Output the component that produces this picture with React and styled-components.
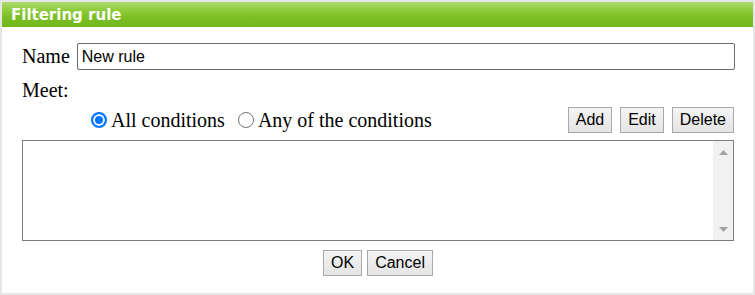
import React from 'react';
import styled, { createGlobalStyle } from 'styled-components';

const Global = createGlobalStyle`
  html, body { margin: 0; padding: 0; background: #fff; }
  body { width: 755px; height: 295px; overflow: hidden; }
`;

const Panel = styled.div`
  box-sizing: border-box;
  width: 755px;
  height: 295px;
  border: 2px solid #e6e6e6;
  display: flex;
  flex-direction: column;
  background: #fff;
`;

const Header = styled.div`
  flex: none;
  height: 25px;
  display: flex;
  align-items: center;
  padding-left: 9px;
  background: linear-gradient(to bottom, #b0dc70 0%, #90cd40 30%, #7bbf24 60%, #72b71c 100%);
  color: #fff;
  font: bold 15px "DejaVu Sans", Verdana, sans-serif;
`;

const Body = styled.div`
  flex: 1;
  display: flex;
  flex-direction: column;
  padding: 16px 19px 0 20px;
  font-family: "Liberation Serif", "Times New Roman", serif;
  font-size: 20px;
  color: #000;
`;

const NameRow = styled.div`
  display: flex;
  align-items: center;
  gap: 7px;
`;

const Label = styled.span`
  line-height: 23px;
  margin-top: ${p => p.$mt || 0}px;
`;

const TextInput = styled.input`
  flex: 1;
  box-sizing: border-box;
  height: 27px;
  margin: 0 -1px 0 0;
  padding: 0 4px;
  border: 1px solid #6b6b6b;
  border-radius: 2px;
  font: 16px "Liberation Sans", Arial, sans-serif;
  color: #000;
  outline: none;
`;

const OptionsRow = styled.div`
  margin-top: 5px;
  height: 26px;
  display: flex;
  align-items: center;
  justify-content: space-between;
`;

const RadioGroup = styled.div`
  display: flex;
  align-items: center;
  gap: 13px;
  padding-left: 69px;
`;

const RadioLabel = styled.label`
  display: inline-flex;
  align-items: center;
  gap: 4px;
  line-height: 23px;
`;

const Radio = styled.input.attrs({ type: 'radio' })`
  appearance: none;
  -webkit-appearance: none;
  box-sizing: border-box;
  width: 16px;
  height: 16px;
  margin: 0;
  border-radius: 50%;
  border: 1px solid #767676;
  background: #fff;
  &:checked {
    border: 2px solid #0075ff;
    background: #0075ff;
    box-shadow: inset 0 0 0 2px #fff;
  }
`;

const ButtonGroup = styled.div`
  display: flex;
  gap: ${p => p.$gap}px;
  justify-content: ${p => p.$center ? 'center' : 'flex-end'};
  margin-top: ${p => p.$mt || 0}px;
`;

const Button = styled.button`
  box-sizing: border-box;
  height: 26px;
  margin: 0;
  padding: 0 7px;
  border: 1px solid #a9a9a9;
  border-radius: 0;
  background: linear-gradient(to bottom, #f4f4f4, #e4e4e4);
  font: 16px "Liberation Sans", Arial, sans-serif;
  color: #000;
`;

const ListBox = styled.div`
  margin-top: 7px;
  box-sizing: border-box;
  height: 101px;
  border: 1px solid #7d7d7d;
  display: flex;
  justify-content: flex-end;
`;

const ScrollBar = styled.div`
  width: 20px;
  background: #f1f1f1;
  display: flex;
  flex-direction: column;
  justify-content: space-between;
`;

const ScrollButton = styled.div`
  height: 22px;
  display: flex;
  align-items: center;
  justify-content: center;
`;

const Arrow = ({ down }) => (
  <svg width="9" height="5" viewBox="0 0 9 5">
    <polygon points={down ? '0,0 9,0 4.5,5' : '0,5 9,5 4.5,0'} fill="#a3a3a3" />
  </svg>
);

export default function App() {
  return (
    <>
      <Global />
      <Panel>
        <Header>Filtering rule</Header>
        <Body>
          <NameRow>
            <Label>Name</Label>
            <TextInput defaultValue="New rule" />
          </NameRow>
          <Label $mt={9}>Meet:</Label>
          <OptionsRow>
            <RadioGroup>
              <RadioLabel>
                <Radio name="meet" defaultChecked />
                All conditions
              </RadioLabel>
              <RadioLabel>
                <Radio name="meet" />
                Any of the conditions
              </RadioLabel>
            </RadioGroup>
            <ButtonGroup $gap={8}>
              <Button>Add</Button>
              <Button>Edit</Button>
              <Button>Delete</Button>
            </ButtonGroup>
          </OptionsRow>
          <ListBox>
            <ScrollBar>
              <ScrollButton><Arrow /></ScrollButton>
              <ScrollButton><Arrow down /></ScrollButton>
            </ScrollBar>
          </ListBox>
          <ButtonGroup $gap={5} $center $mt={9}>
            <Button>OK</Button>
            <Button>Cancel</Button>
          </ButtonGroup>
        </Body>
      </Panel>
    </>
  );
}
